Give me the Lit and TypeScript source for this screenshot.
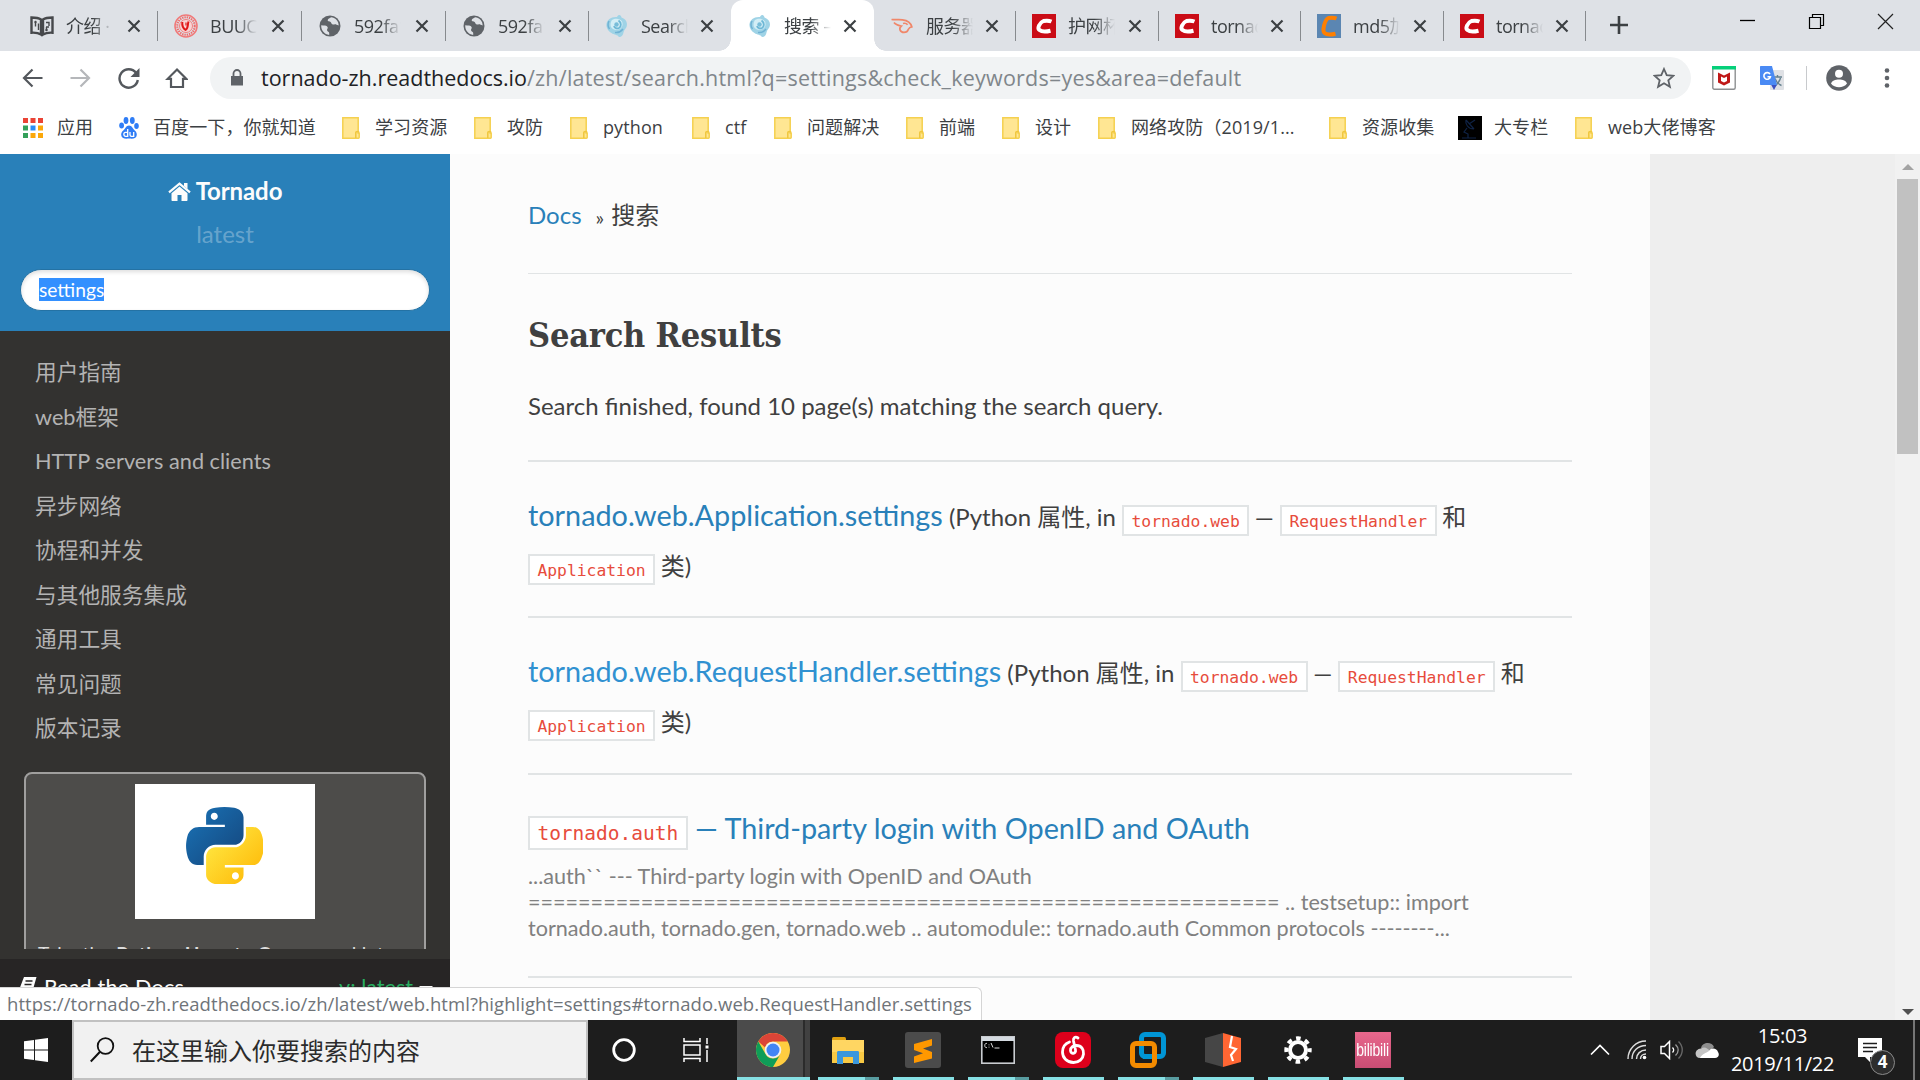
import { LitElement, html, css, svg } from "lit";
import { customElement, property } from "lit/decorators.js";
import { classMap } from "lit/directives/class-map.js";
import { styleMap } from "lit/directives/style-map.js";

const icon = (w: number, h: number, box: string, body: unknown) =>
  html`<svg width=${w} height=${h} viewBox=${box} fill="none">${body}</svg>`;

/* ---------- favicons ---------- */
const globe = icon(24, 24, "0 0 24 24", svg`
  <circle cx="12" cy="12" r="10.500" fill="#5f6368"/>
  <path d="M3.200 11.200c2.600.3 5.600 0 6.400 1.700c.7 1.600-1 2-.5 3.600c.4 1.200 2.100 1 2.100 2.500v1.900C6.500 20.300 3 16.500 3.200 11.200zM13 3.200c-1 1.300-3.300 1.300-3.300 3c0 1.500 2.600.8 3.300 2.200c.7 1.600 1.600 2.400 3.400 2c1.600-.3 2.200.6 4.300 1.200C20.700 6.800 17.200 3.500 13 3.200z" fill="#dee1e6"/>`);
const book = icon(24, 24, "0 0 24 24", svg`
  <path d="M1.500 3.500c4 0 7 .3 9.500 2v15c-2.800-1.800-5.500-2-9.500-1.800zM22.500 3.500c-4 0-7 .3-9.500 2v15c2.800-1.800 5.500-2 9.500-1.800z" stroke="#46484b" stroke-width="2.400"/>
  <path d="M5.500 8v4.500M8.500 16V9.500M16 8.500h3v3.500M16.500 13v4M16 13h3" stroke="#46484b" stroke-width="1.400"/>
  <circle cx="5.500" cy="8" r="1.200" fill="#46484b"/><circle cx="16.500" cy="16" r="1.200" fill="#46484b"/>`);
const seal = icon(24, 24, "0 0 24 24", svg`
  <circle cx="12" cy="12" r="11" stroke="#f07a7a" stroke-width="1.600"/>
  <circle cx="12" cy="12" r="8.700" stroke="#ee6a6a" stroke-width="2" stroke-dasharray="1.400 .9"/>
  <circle cx="12" cy="12" r="6.500" fill="#f9d4d4" stroke="#f08080" stroke-width="1"/>
  <path d="M8.300 8c-.3 3 1 6.500 3.200 7.800c3-1.500 1.800-4.500 3-8.300" stroke="#e01818" stroke-width="2"/>
  <path d="M12 8.500v3" stroke="#e01818" stroke-width="1.200"/>`);
const tornado = icon(24, 24, "0 0 24 24", svg`
  <path d="M12 3c1.500-3 4-2.500 4.500.5c4.500 1.500 6.500 5.500 5 9.500c-.8 2-2.500 3-3 5.500c-.3 2.500-2.300 4.800-4.600 4.500c-1-2.500-5-2-7.400-4C3 17 1 13.500 1.500 10C2 6 6 2.500 12 3z" fill="#9fd3e6"/>
  <path d="M7 6c3-2 8-1.800 10 1.500c1.500 3 0 7-3.500 8c-4 1-8-1-8-4.500c0-2 .5-3.800 1.500-5z" fill="#d3eef6"/>
  <path d="M13.500 6.500c3 2 3 6 .5 7.500c-2 1-4.500 0-5-2" stroke="#6eb8d6" stroke-width="1.800"/>
  <circle cx="11.500" cy="10.500" r="2.200" fill="#78bdd9"/>
  <path d="M10 18.500c3 .5 6-1 8-3.500M4 7c-1.500 3-1 6 .5 8" stroke="#6fb2d4" stroke-width="1.500"/>`);
const liebao = icon(24, 24, "0 0 24 24", svg`
  <path d="M1.500 5.500c4 .5 7-.2 11 .3c5 .6 8.500 3.700 9.300 7c-2.300.2-2.800 1.200-3.500 2.600c-.5 1.600-1.400 3-4.300 3c-4 0-5.500-4-2.700-6.400c-2.600-.5-5.500-1-7.300-3.500M13 9.500c1.800-.5 3.600 0 4.600 1.200" stroke="#f0876a" stroke-width="1.700"/>`);
const csdn = (bg: string, fg: string, r = 6.2) => icon(24, 24, "0 0 24 24", svg`
  <rect width="24" height="24" fill=${bg}/>
  <path d="M19.500 ${12 - r + 1}C17 ${12 - r} 14 ${12 - r} 11.500 ${12 - r + .5}C7.500 ${12 - r + 2} 5 ${12 + r - 3} 7.500 ${12 + r - 1.5}C10 ${12 + r + .6} 14.500 ${12 + r + .2} 18.500 ${12 + r - .8}" stroke=${fg} stroke-width="4"/>`);
const red = csdn("#ca0c16", "#ffffff", 5.5);
const orange = csdn("#5b86b2", "#ff7f00", 8.5);

/* ---------- bookmark icons ---------- */
const folder = icon(18, 22, "0 0 18 22", svg`
  <path d="M.8.800h15.400v15.500h1v4.200c0 .5-.3.700-.7.700H.8z" fill="#ffe693" stroke="#f5d04f" stroke-width="1.500"/>
  <path d="M13.800 21v-5.500c0-1.200 3.200-1.200 3.200 0" stroke="#f0c63c" stroke-width="1.500"/>`);
const appsGrid = icon(20, 20, "0 0 20 20", svg`
  <path d="M0 0h5v5H0zM7.500 0h5v5h-5zM15 0h5v5h-5z" fill="#ea4335"/>
  <path d="M0 7.500h5v5H0zM0 15h5v5H0z" fill="#34a05a"/><path d="M7.500 7.500h5v5h-5z" fill="#2a8cf5"/>
  <path d="M15 7.500h5v5h-5zM7.500 15h5v5h-5zM15 15h5v5h-5z" fill="#fba80a"/>`);
const paw = icon(20, 22, "0 0 20 22", svg`
  <g fill="#2f7df6"><ellipse cx="7" cy="3.500" rx="2.400" ry="3.400"/><ellipse cx="13.300" cy="3.500" rx="2.400" ry="3.400"/>
  <ellipse cx="2.600" cy="8.600" rx="2.400" ry="3"/><ellipse cx="17.500" cy="9" rx="2.300" ry="3"/>
  <path d="M10 8.500c3 0 3.500 3 5.500 4.800c2 1.800 2.800 3.700 2 6c-.8 2.300-3.200 2.600-7.500 2.200c-4.300.4-6.700 0-7.500-2.200c-.8-2.300 0-4.200 2-6C6.500 11.500 7 8.500 10 8.500z"/></g>
  <path d="M8.700 12v7.300H6.500c-2.200 0-2.200-4 0-4h2.200M11 15v2.700c0 1.200.5 1.600 1.500 1.600h2.200V15" stroke="#fff" stroke-width="1.300"/>`);
const dish = icon(24, 24, "0 0 24 24", svg`<rect width="24" height="24" fill="#000"/>
  <path d="M8 4c-1 4 2 9 8 9M8 4l8 9M11 8l6-4M9 12l-3 4l4 2v4M4 22h14" stroke="#0f2346" stroke-width="1.200"/>`);

interface TabInfo { pic: unknown; title: string; w: number; active?: boolean; next?: boolean; }
const TABS: TabInfo[] = [
  { pic: book, title: "介绍 · 文档", w: 144 },
  { pic: seal, title: "BUUCTF", w: 144 },
  { pic: globe, title: "592fa1", w: 144 },
  { pic: globe, title: "592fa1", w: 143 },
  { pic: tornado, title: "Search", w: 142, next: true },
  { pic: tornado, title: "搜索 — 文", w: 143, active: true },
  { pic: liebao, title: "服务器端", w: 142 },
  { pic: red, title: "护网杯", w: 143 },
  { pic: red, title: "tornado", w: 142 },
  { pic: orange, title: "md5加密", w: 143 },
  { pic: red, title: "tornado", w: 142 },
];

const MARKS: { pic: unknown; text: string; gap: number; w: number }[] = [
  { pic: appsGrid, text: "应用", gap: 14, w: 96 },
  { pic: paw, text: "百度一下，你就知道", gap: 14, w: 223 },
  { pic: folder, text: "学习资源", gap: 15, w: 132 },
  { pic: folder, text: "攻防", gap: 15, w: 96 },
  { pic: folder, text: "python", gap: 15, w: 122 },
  { pic: folder, text: "ctf", gap: 15, w: 82 },
  { pic: folder, text: "问题解决", gap: 15, w: 132 },
  { pic: folder, text: "前端", gap: 15, w: 96 },
  { pic: folder, text: "设计", gap: 15, w: 96 },
  { pic: folder, text: "网络攻防（2019/1...", gap: 15, w: 231 },
  { pic: folder, text: "资源收集", gap: 15, w: 129 },
  { pic: dish, text: "大专栏", gap: 12, w: 117 },
  { pic: folder, text: "web大佬博客", gap: 15, w: 150 },
];

@customElement("browser-chrome")
class BrowserChrome extends LitElement {
  static styles = css`
    :host { display: flex; flex-direction: column; height: 154px; background: #fff; color: #3c4043;
      font-family: "Open Sans", "Noto Sans CJK SC", sans-serif; font-size: 18px; }
    svg { display: block; flex: none; }
    .strip { display: flex; height: 51px; background: #dee1e6; padding-left: 14px; flex: none; }
    .tab { display: flex; align-items: center; box-sizing: border-box; flex: none; padding: 0 16px 0 16px; position: relative; }
    .tab::after { content: ""; position: absolute; right: 0; top: 11px; width: 1.500px; height: 30px; background: #878a8e; }
    .tab.active { background: #fff; border-radius: 12px 12px 0 0; padding-left: 17px; }
    .tab.active::after, .tab.next::after { display: none; }
    .foot { position: absolute; bottom: 0; width: 12px; height: 12px; }
    .foot.l { left: -12px; background: radial-gradient(circle at 0 0, transparent 11.500px, #fff 12px); }
    .foot.r { right: -12px; background: radial-gradient(circle at 100% 0, transparent 11.500px, #fff 12px); }
    .title { margin-left: 12px; width: 48px; white-space: nowrap; overflow: hidden; line-height: 30px; padding-top: 1px;
      letter-spacing: -0.500px;
      -webkit-mask-image: linear-gradient(90deg, #000 55%, transparent 98%); mask-image: linear-gradient(90deg, #000 55%, transparent 98%); }
    .x { margin-left: auto; }
    .plus { margin: 16px 0 0 24px; }
    .win { margin-left: auto; display: flex; padding: 13px 26px 0 0; gap: 52px; }
    .bar { display: flex; align-items: center; height: 54px; padding: 0; flex: none; }
    .navs { display: flex; align-items: center; gap: 24px; padding-left: 20px; width: 190px; box-sizing: content-box; }
    .omni { display: flex; align-items: center; box-sizing: border-box; width: 1481px; height: 42px; border-radius: 21px; background: #f1f3f4;
      padding: 0 16px 0 20px; }
    .url { margin-left: 17px; font-size: 21.500px; line-height: 40px; color: #80868b; white-space: nowrap; letter-spacing: .22px; }
    .url b { font-weight: 400; color: #202124; letter-spacing: 0; }
    .omni svg:last-child { margin-left: auto; }
    .ext { display: flex; align-items: center; padding-left: 21px; }
    .ext .e2 { margin-left: 24px; }
    .vr { width: 1px; height: 24px; background: #c8cacd; margin-left: 21px; }
    .av { margin-left: 19px; }
    .dots { margin-left: 32px; }
    .marks { display: flex; align-items: center; padding: 0 0 3px 23px; height: 46px; }
    .mark { display: flex; align-items: center; flex: none; white-space: nowrap; letter-spacing: .1px; }
    .mark span { line-height: 26px; margin-top: -2px; }
  `;
  render() {
    return html`
      <div class="strip">
        ${TABS.map(t => html`<div class=${classMap({ tab: true, active: !!t.active, next: !!t.next })} style=${styleMap({ width: t.w + "px" })}>
          ${t.active ? html`<span class="foot l"></span><span class="foot r"></span>` : ""}
          ${t.pic}<span class="title">${t.title}</span>
          <span class="x">${icon(16, 16, "0 0 16 16", svg`<path d="M2.500 2.500l11 11M13.500 2.500l-11 11" stroke="#3c4043" stroke-width="2.200"/>`)}</span>
        </div>`)}
        <span class="plus">${icon(18, 18, "0 0 18 18", svg`<path d="M9 0v18M0 9h18" stroke="#3c4043" stroke-width="2.600"/>`)}</span>
        <div class="win">
          ${icon(17, 17, "0 0 17 17", svg`<path d="M1 7.500h15" stroke="#000" stroke-width="1.300"/>`)}
          ${icon(17, 17, "0 0 17 17", svg`<path d="M1.500 4.500h11v11h-11zM4.500 4V1.500h11v11h-2.500" stroke="#000" stroke-width="1.200"/>`)}
          ${icon(17, 17, "0 0 17 17", svg`<path d="M1 1l15 15M16 1L1 16" stroke="#222" stroke-width="1.200"/>`)}
        </div>
      </div>
      <div class="bar">
        <div class="navs">
          ${icon(24, 24, "0 0 24 24", svg`<path d="M22.500 12H4.500M12.500 3.500L4 12l8.500 8.500" stroke="#54585d" stroke-width="2.200"/>`)}
          ${icon(24, 24, "0 0 24 24", svg`<path d="M2.500 12h18M12.500 3.500L21 12l-8.500 8.500" stroke="#b5b7ba" stroke-width="2.200"/>`)}
          ${icon(24, 24, "0 0 24 24", svg`<path d="M20 6.800A9.200 9.200 0 1 0 21.800 14" stroke="#54585d" stroke-width="2.400"/><path d="M23.500 2v9h-9z" fill="#54585d"/>`)}
          ${icon(24, 24, "0 0 24 24", svg`<path d="M13 3.500l9.300 9.300h-3.300V21H7v-8.200H3.700z" stroke="#54585d" stroke-width="2.200"/>`)}
        </div>
        <div class="omni">
          ${icon(14, 18, "0 0 14 18", svg`<path d="M1 7h12v9.500H1z" fill="#5f6368"/><path d="M3.500 7V4.500a3.500 3.500 0 0 1 7 0V7" stroke="#5f6368" stroke-width="1.800"/>`)}
          <span class="url"><b>tornado-zh.readthedocs.io</b>/zh/latest/search.html?q=settings&amp;check_keywords=yes&amp;area=default</span>
          ${icon(22, 22, "0 0 22 22", svg`<path d="M11 2l2.700 6.200l6.700.6l-5.100 4.400l1.600 6.600L11 16.300l-5.900 3.500l1.600-6.600L1.600 8.800l6.700-.6z" stroke="#5f6368" stroke-width="1.800"/>`)}
        </div>
        <div class="ext">
          ${icon(24, 24, "0 0 24 24", svg`<rect x=".8" y=".8" width="22.400" height="22.400" rx="1.500" fill="#fff" stroke="#8d8f91" stroke-width="1.400"/><path d="M0 0h24v3.500H0z" fill="#05d07a"/>
            <path d="M6 6.500l6 3l6-3v10L12 19.500L6 16.500zM9 10.500v4.500l3 1.500l3-1.500v-4.500l-3 1.500z" fill="#c01818" fill-rule="evenodd"/>`)}
          <span class="e2">${icon(25, 25, "0 0 25 25", svg`<rect x="10" y="4" width="14" height="20" rx="1" fill="#dfe1e5"/>
            <path d="M13 11h9M17.500 9v2M15 12.500c1.500 4 4 6 6.500 7M20.500 12c-1 4-3 6-5.500 8" stroke="#64808f" stroke-width="1.400"/>
            <path d="M11 18.500h6l-3 5.500z" fill="#3b50c0"/><path d="M1 0h11l5 19H1c-.6 0-1-.4-1-1V1c0-.6.4-1 1-1z" fill="#4a8af4"/>
            <path d="M10 8.200a3.300 3.300 0 1 0 .4 2.500H7.500" stroke="#fff" stroke-width="1.600"/>`)}</span>
          <span class="vr"></span>
          <span class="av">${icon(26, 26, "0 0 26 26", svg`<circle cx="13" cy="13" r="12.800" fill="#5f6368"/><circle cx="13" cy="8.800" r="4" fill="#fff"/><path d="M5 18.500c1.500-5.500 14.500-5.500 16 0c-3.500 5-12.500 5-16 0z" fill="#fff"/>`)}</span>
          <span class="dots">${icon(6, 22, "0 0 6 22", svg`<g fill="#5f6368"><circle cx="3" cy="3.500" r="2.300"/><circle cx="3" cy="11" r="2.300"/><circle cx="3" cy="18.500" r="2.300"/></g>`)}</span>
        </div>
      </div>
      <div class="marks">
        ${MARKS.map(m => html`<div class="mark" style=${styleMap({ width: m.w + "px", gap: m.gap + "px" })}>${m.pic}<span>${m.text}</span></div>`)}
      </div>`;
  }
}

@customElement("docs-sidebar")
class DocsSidebar extends LitElement {
  static styles = css`
    :host { display: flex; flex-direction: column; width: 450px; height: 866px; background: #333230; flex: none; overflow: hidden;
      font-family: Lato, "Noto Sans CJK SC", sans-serif; font-size: 24px; }
    svg { display: block; }
    .top { height: 177px; background: #2980b9; box-sizing: border-box; padding: 19px 20px 0; flex: none; color: #fcfcfc; }
    .home { display: flex; justify-content: center; align-items: center; gap: 5px; height: 36px; font-weight: 700; line-height: 36px; letter-spacing: -0.100px; }
    .ver { text-align: center; color: rgba(255,255,255,.3); height: 36px; line-height: 36px; margin-top: 7px; }
    .box { margin-top: 17px; height: 42px; box-sizing: border-box; border: 1.500px solid #2472a4; border-radius: 21px; background: #fff;
      box-shadow: inset 0 2px 4px #ddd; padding: 8px 0 0 18px; font-size: 19.200px; }
    .box span { background: #3390ff; color: #fff; line-height: 23px; display: inline-block; }
    .body { height: 618px; flex: none; overflow: hidden; }
    .menu { padding: 19px 0 0 35px; margin: 0; list-style: none; color: #b3b3b3; font-size: 21.700px; }
    .menu li { height: 44.500px; line-height: 44px; }
    .ad { margin: 21.500px 24px 0; box-sizing: border-box; height: 320px; border: 2px solid #a09f9e; border-radius: 8px; background: #4d4c4a; padding: 10px 12px; color: #dcdcdc; }
    .pic { width: 180px; height: 135px; background: #fff; margin: 0 auto; display: flex; justify-content: center; padding: 23px 2px 0 0; box-sizing: border-box; }
    .ad p { margin: 22px 0 0; font-size: 19.200px; line-height: 26px; letter-spacing: .3px; white-space: nowrap; }
    .gap { height: 10px; flex: none; }
    .rtd { background: #272525; flex: 1; display: flex; justify-content: space-between; padding: 11px 17px 0 17px; font-size: 21.600px; color: #fcfcfc; line-height: 34px; }
    .rtd div { display: flex; gap: 6px; }
    .rtd svg { margin-top: 6px; }
    .title { letter-spacing: .2px; }
    .v { color: #27ae60; }
    .caret { margin-top: 16px; width: 0; height: 0; border: 7px solid transparent; border-top-color: #fcfcfc; }
  `;
  render() {
    const items = ["用户指南", "web框架", "HTTP servers and clients", "异步网络", "协程和并发", "与其他服务集成", "通用工具", "常见问题", "版本记录"];
    return html`
      <div class="top">
        <div class="home">
          ${icon(23, 19, "0 0 23 19", svg`<path d="M11.500 4.500l8 6.700V18c0 .6-.4 1-1 1h-5v-6h-4v6h-5c-.6 0-1-.4-1-1v-6.800z" fill="#fcfcfc"/><path d="M1 10.300L11.500 1.600L22 10.300" stroke="#fcfcfc" stroke-width="2.200"/><path d="M16 1h3.500v6L16 4z" fill="#fcfcfc"/>`)}
          <span>Tornado</span>
        </div>
        <div class="ver">latest</div>
        <div class="box"><span>settings</span></div>
      </div>
      <div class="body">
        <ul class="menu">${items.map(i => html`<li>${i}</li>`)}</ul>
        <div class="ad">
          <div class="pic">${icon(77, 77, "0 0 110 110", svg`
            <defs><linearGradient id="b" x1="0" y1="0" x2="1" y2="1"><stop offset="0" stop-color="#1a74b8"/><stop offset="1" stop-color="#14447a"/></linearGradient>
            <linearGradient id="y" x1="0" y1="0" x2="1" y2="1"><stop offset="0" stop-color="#ffee4a"/><stop offset="1" stop-color="#feb300"/></linearGradient></defs>
            <path fill="url(#b)" fill-rule="evenodd" d="M54.900 0c-4.600 0-9 .4-12.800 1.100C30.800 3.100 28.700 7.200 28.700 15v10.200h26.800v3.400H18.700c-7.800 0-14.600 4.700-16.800 13.600c-2.400 10.200-2.500 16.500 0 27.200c1.900 7.900 6.500 13.600 14.200 13.600h9.200V70.700c0-8.900 7.600-16.700 16.800-16.700h26.700c7.500 0 13.400-6.100 13.400-13.700V15c0-7.300-6.100-12.700-13.400-13.900C64.100.3 59.500 0 54.900 0zM40.400 8.200c2.800 0 5 2.300 5 5.100c0 2.800-2.300 5.100-5 5.100c-2.800 0-5-2.300-5-5.100c0-2.800 2.200-5.100 5-5.100z"/>
            <path fill="url(#y)" fill-rule="evenodd" d="M85.600 28.700v11.900c0 9.200-7.800 17-16.800 17H42.100c-7.300 0-13.400 6.300-13.400 13.600v25.500c0 7.300 6.300 11.500 13.400 13.600c8.500 2.500 16.600 2.900 26.700 0c6.700-1.900 13.400-5.900 13.400-13.600V86.400H55.500V83h40.100c7.800 0 10.700-5.400 13.400-13.600c2.800-8.400 2.700-16.500 0-27.200c-1.900-7.800-5.600-13.600-13.400-13.600zM70.600 93.300c2.800 0 5 2.300 5 5.100c0 2.800-2.300 5.100-5 5.100s-5-2.300-5-5.100c0-2.800 2.200-5.100 5-5.100z"/>`)}</div>
          <p>Take the <b>Python How-to Course</b> and let</p>
        </div>
      </div>
      <div class="gap"></div>
      <div class="rtd">
        <div>${icon(21, 20, "0 0 21 20", svg`<path d="M7 1h12.500l-4.500 16H3c-1.500 0-1.700-1.500-1-3z" fill="#fcfcfc"/><path d="M8.500 5h7M7.500 8.500h7M3 14.500h10.500" stroke="#272525" stroke-width="1.400"/>`)}<span class="title">Read the Docs</span></div>
        <div class="v">v: latest <span class="caret"></span></div>
      </div>`;
  }
}

@customElement("docs-content")
class DocsContent extends LitElement {
  static styles = css`
    :host { display: block; width: 1200px; height: 866px; box-sizing: border-box; padding: 43px 78px 0; background: #fcfcfc; flex: none; overflow: hidden;
      font-family: Lato, "Noto Sans CJK SC", sans-serif; font-size: 24px; color: #404040; }
    .crumbs { display: flex; height: 76px; border-bottom: 1px solid #e1e4e5; line-height: 36px; }
    .crumbs a { color: #2980b9; margin-right: 14px; }
    .crumbs .s { margin-right: 7px; font-size: 20px; line-height: 40px; }
    h2 { margin: 39px 0 0; font: 700 34px/44px "Roboto Slab", "DejaVu Serif Condensed", "DejaVu Serif", serif; font-stretch: condensed; letter-spacing: -.2px; height: 44px; white-space: nowrap; }
    .found { margin: 31px 0 0; line-height: 36px; height: 72px; }
    ul { margin: 0; padding: 0; list-style: none; }
    li { border-top: 2px solid #e1e4e5; box-sizing: border-box; padding-top: 30px; height: 156px; line-height: 49px; white-space: nowrap; }
    li.second { height: 157px; }
    li.third { border-bottom: 2px solid #e1e4e5; height: 205px; }
    .t { font-size: 28.800px; line-height: 40px; color: #2980b9; }
    .t.hover { color: #3091d1; }
    code { display: inline-block; font: 16.350px/25px "DejaVu Sans Mono", monospace; color: #e74c3c; background: #fff; border: 2px solid #e1e4e5; padding: 2px 7.400px 0; vertical-align: -1px; margin: 0 -.5px 0 0; }
    code.big { font-size: 19.500px; line-height: 28px; font-weight: 400; margin: 0; }
    .sum { color: #808080; font-size: 21.600px; line-height: 26px; margin-top: 9px; }
  `;
  render() {
    const tail = html` (Python 属性, in <code>tornado.web</code> — <code>RequestHandler</code> 和<br><code>Application</code> 类)`;
    return html`
      <div class="crumbs"><a>Docs</a><span class="s">»</span><span>搜索</span></div>
      <h2>Search Results</h2>
      <p class="found">Search finished, found 10 page(s) matching the search query.</p>
      <ul>
        <li><span class="t">tornado.web.Application.settings</span>${tail}</li>
        <li class="second"><span class="t hover">tornado.web.RequestHandler.settings</span>${tail}</li>
        <li class="third"><span class="t"><code class="big">tornado.auth</code> — Third-party login with OpenID and OAuth</span>
          <div class="sum">...auth\`\` --- Third-party login with OpenID and OAuth<br>${"=".repeat(60)} .. testsetup:: import<br>tornado.auth, tornado.gen, tornado.web .. automodule:: tornado.auth Common protocols --------...</div>
        </li>
      </ul>`;
  }
}

const clouds = icon(24, 17, "0 0 24 17", svg`<path d="M6 6c1-6 11-7 13-1l-5 5z" fill="#8d8d8d"/><path d="M5 16c-6 0-6-9 1-9.500C10 4 13 7 15 9l-7 7z" fill="#c4c4c4"/><path d="M14 9c2-4 8-3 9 1c2 3 0 6-3 6H5c2-4 6-5 9-7z" fill="#fff"/>`);

const APPS: { pic: unknown; kind: string }[] = [
  { kind: "many", pic: icon(34, 34, "0 0 34 34", svg`<rect x="1" y="4" width="14" height="8" rx="1.500" fill="#e0a010"/><path d="M1 7h32v23H1z" fill="#ffd662"/><path d="M1 19h32v11H1z" fill="#f8c944"/><path d="M6 31V19.500c0-1 .6-1.500 1.500-1.500h19c1 0 1.500.5 1.500 1.500V31h-6v-7H12v7z" fill="#3a97dd"/>`) },
  { kind: "one", pic: icon(36, 36, "0 0 36 36", svg`<rect width="36" height="36" rx="3" fill="#4b4b4b"/><path d="M27 7v6.500l-9 3l9 3.500v6.500L9 31v-6.500l9-3.200l-9-3.300v-6z" fill="#ff9800"/>`) },
  { kind: "many", pic: icon(34, 28, "0 0 34 28", svg`<rect x=".8" y=".8" width="32.400" height="26.400" fill="#000" stroke="#c9ccd0" stroke-width="1.600"/><path d="M1 1h32v4H1z" fill="#d4dae0"/><path d="M6 7.500c-3-1-3 5 0 4M8 8.500v.8M8 10.700v.8M10 7l2 4.500M13.500 12h5" stroke="#ddd" stroke-width="1"/>`) },
  { kind: "one", pic: icon(36, 36, "0 0 36 36", svg`<rect width="36" height="36" rx="8" fill="#dd001b"/><path d="M23 6c-3-2-5 0-4.500 3l2 9c.8 4-5 4.500-5 .5c0-3.500 3-5 6-5c5 0 7.500 4 7 8.500c-.5 5-4.500 8.500-10 8.500c-7 0-11-5-11-10.500c0-5 3-8.500 7-10" stroke="#fff" stroke-width="2.800" stroke-linecap="round"/>`) },
  { kind: "many", pic: icon(36, 36, "0 0 36 36", svg`<rect x="11.500" y="2.500" width="22" height="22" rx="3.500" stroke="#0095d5" stroke-width="5"/><rect x="2.500" y="11.500" width="22" height="22" rx="3.500" stroke="#f38b00" stroke-width="5"/><path d="M13 24.500h9" stroke="#0095d5" stroke-width="5"/>`) },
  { kind: "one", pic: icon(36, 34, "0 0 36 34", svg`<path d="M0 5l18-5v34L0 29z" fill="#464646"/><path d="M18 0l18 5v24l-18 5z" fill="#ff6633"/><path d="M27 3l-2 11l6 2l-5 6l2 6" stroke="#fff" stroke-width="2.200"/>`) },
  { kind: "one", pic: icon(28, 28, "0 0 28 28", svg`<circle cx="14" cy="14" r="8" stroke="#fff" stroke-width="4"/><circle cx="14" cy="14" r="11.700" stroke="#fff" stroke-width="4" stroke-dasharray="4.600 4.589" stroke-dashoffset="2.300"/>`) },
];

@customElement("task-bar")
class TaskBar extends LitElement {
  static styles = css`
    :host { display: flex; height: 60px; background: #1d1d1d; color: #fff; font-family: "Open Sans", "Noto Sans CJK SC", sans-serif; }
    svg { display: block; flex: none; }
    .start { width: 72px; display: flex; align-items: center; justify-content: center; flex: none; }
    .find { width: 516px; box-sizing: border-box; border: 2px solid #c1c1c1; background: #f1f1f1; display: flex; align-items: center; padding-left: 16px; color: #2b2b2b; font-size: 24px; flex: none; }
    .find span { margin-left: 17px; white-space: nowrap; line-height: 40px; padding-top: 2px; }
    .btn { width: 72px; display: flex; align-items: center; justify-content: center; flex: none; }
    .btn.tv { width: 77px; box-sizing: border-box; padding-right: 6px; }
    .chrome { width: 73px; box-sizing: border-box; padding-top: 13px; padding-left: 19px; background: linear-gradient(90deg, #4b4b4b 66px, #2b2b2b 66px, #2b2b2b 68px, #414141 68px); border-bottom: 3px solid #86e0e4; flex: none; }
    .apps { display: flex; gap: 14px; padding-left: 8px; }
    .app { width: 61px; height: 60px; box-sizing: border-box; display: flex; align-items: center; justify-content: center; border-bottom: 3px solid #86e0e4; padding: 3px 2px 0 0; position: relative; }
    .app.many::after { content: ""; position: absolute; right: 0; bottom: -3px; width: 14px; height: 3px; background: #589ca0; }
    .bili { width: 36px; height: 36px; background: linear-gradient(#e8678c, #c94d74); display: flex; align-items: center; justify-content: center; }
    .bili span { font: 400 14px/36px "Liberation Sans Narrow", "Liberation Sans", sans-serif; letter-spacing: -.2px; transform: scaleY(1.3); }
    .tray { margin-left: auto; display: flex; align-items: center; }
    .clock { margin-left: 9px; width: 109px; text-align: center; font-size: 20px; line-height: 28px; height: 56px; letter-spacing: -.3px; white-space: nowrap; }
    .note { position: relative; margin-left: 21px; }
    .badge { position: absolute; left: 12px; top: 12px; width: 23px; height: 23px; border: 1px solid #8a8a8a; border-radius: 50%; background: #2d2d2d; font: 700 17px/22px "Open Sans", sans-serif; text-align: center; }
    .edge { width: 2px; height: 60px; background: #767676; margin: 0 5px 0 31px; }
    .net { margin-left: 17px; }
    .vol { margin-left: 13px; }
    .sync { margin-left: 12px; }
  `;
  render() {
    return html`
      <div class="start">${icon(24, 24, "0 0 24 24", svg`<path d="M0 3.300l10-1.400v9.600H0zM11 1.700L24 0v11.500H11zM0 12.500h10v9.600L0 20.700zM11 12.500h13V24l-13-1.700z" fill="#fff"/>`)}</div>
      <div class="find">${icon(25, 26, "0 0 25 26", svg`<circle cx="15.500" cy="9" r="7.800" stroke="#111" stroke-width="1.800"/><path d="M10 14.700L.8 24.500" stroke="#111" stroke-width="2"/>`)}<span>在这里输入你要搜索的内容</span></div>
      <div class="btn">${icon(24, 24, "0 0 24 24", svg`<circle cx="12" cy="12" r="10.300" stroke="#fff" stroke-width="2.800"/>`)}</div>
      <div class="btn tv">${icon(26, 24, "0 0 26 24", svg`<path d="M1 0v3.500h16V0M1 24v-3.500h16V24M1 7h16v10H1zM24 0v6M24 12v12" stroke="#fff" stroke-width="1.500"/><path d="M22.500 7.500h3v3h-3z" fill="#fff"/>`)}</div>
      <div class="chrome">${icon(34, 34, "0 0 34 34", svg`
        <circle cx="17" cy="17" r="17" fill="#ffcd40"/>
        <path d="M2.300 8.500A17 17 0 0 1 31.700 8.500H17a8.500 8.500 0 0 0-8 6z" fill="#db4437"/>
        <path d="M2.300 8.500A17 17 0 0 0 17 34l7.400-12.800a8.500 8.500 0 0 1-14.800 0z" fill="#0f9d58"/>
        <circle cx="17" cy="17" r="8.300" fill="#f1f1f1"/><circle cx="17" cy="17" r="6.500" fill="#4285f4"/>`)}</div>
      <div class="apps">
        ${APPS.map(a => html`<div class="app ${a.kind}">${a.pic}</div>`)}
        <div class="app"><div class="bili"><span>bilibili</span></div></div>
      </div>
      <div class="tray">
        ${icon(20, 12, "0 0 20 12", svg`<path d="M1 10.500L10 1.500L19 10.500" stroke="#fff" stroke-width="1.700"/>`)}
        <span class="net">${icon(20, 20, "0 0 20 20", svg`<path d="M1 19C1 9 9 1 19 1M5 19C5 11 11 5.500 19 5.500M9.500 19c0-5 4-9 9.500-9" stroke="#ddd" stroke-width="1.400"/><path d="M13.500 19c0-3 2.500-5 5.500-5" stroke="#ddd" stroke-width="1.400"/><circle cx="17.500" cy="17.500" r="1.800" fill="#fff"/>`)}</span>
        <span class="vol">${icon(23, 20, "0 0 23 20", svg`<path d="M1 6.500h3.500L9.500 1.500v17l-5-5H1z" stroke="#fff" stroke-width="1.500"/><path d="M12.500 7.500c1.500 1.500 1.500 3.500 0 5" stroke="#fff" stroke-width="1.400"/><path d="M15.500 4.500c3.500 3.500 3.500 7.500 0 11" stroke="#999" stroke-width="1.400"/><path d="M18.500 1.500c5 5 5 12 0 17" stroke="#666" stroke-width="1.400"/>`)}</span>
        <span class="sync">${clouds}</span>
        <div class="clock">15:03<br>2019/11/22</div>
        <div class="note">${icon(24, 24, "0 0 24 24", svg`<path d="M0 0h24v19H12l0 5l-5-5H0z" fill="#fff"/><path d="M5 5.500h14M5 9.500h14M5 13.500h10" stroke="#1d1d1d" stroke-width="1.300"/>`)}<span class="badge">4</span></div>
        <div class="edge"></div>
      </div>`;
  }
}

@customElement("app-root")
class AppRoot extends LitElement {
  static styles = css`
    :host { display: flex; flex-direction: column; width: 1920px; height: 1080px; overflow: hidden; position: relative; }
    .page { display: flex; height: 866px; background: #eee; }
    .scroll { margin-left: auto; width: 25px; background: #f1f1f1; display: flex; flex-direction: column; align-items: center; }
    .up, .down { width: 0; border: 6px solid transparent; }
    .up { border-bottom-color: #a3a3a3; margin-top: 4px; }
    .down { border-top-color: #505050; margin: auto 0 -1px; }
    .thumb { width: 21px; height: 275px; background: #c1c1c1; margin-top: 9px; }
    .status { position: absolute; left: 0; top: 987px; width: 982px; height: 33px; box-sizing: border-box; background: #fff; border: 1px solid #d5d5d5; border-width: 1px 1px 0 0; border-radius: 0 6px 0 0;
      padding-left: 7px; font: 18.500px/32px "Open Sans", sans-serif; letter-spacing: .05px; color: #6f7479; white-space: nowrap; overflow: hidden; }
  `;
  @property() link = "https://tornado-zh.readthedocs.io/zh/latest/web.html?highlight=settings#tornado.web.RequestHandler.settings";
  render() {
    return html`
      <browser-chrome></browser-chrome>
      <div class="page">
        <docs-sidebar></docs-sidebar>
        <docs-content></docs-content>
        <div class="scroll"><span class="up"></span><span class="thumb"></span><span class="down"></span></div>
      </div>
      <task-bar></task-bar>
      <div class="status">${this.link}</div>`;
  }
}
